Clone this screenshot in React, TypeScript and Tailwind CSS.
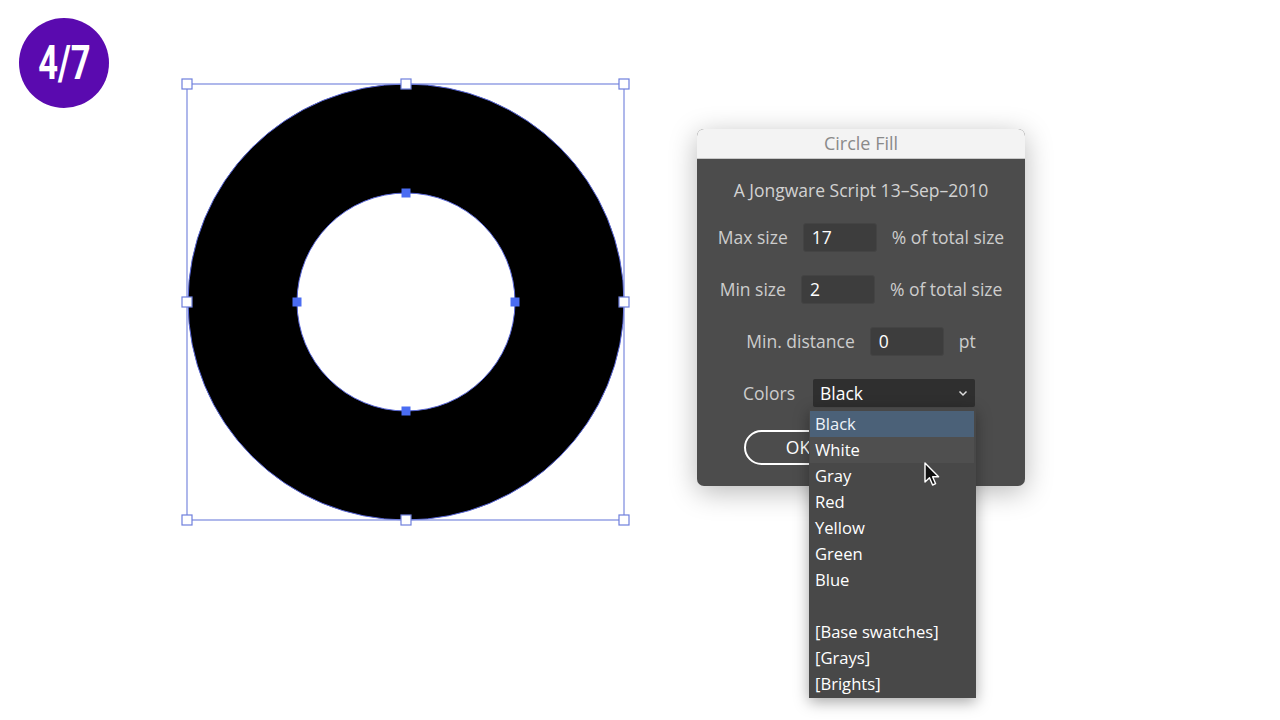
import React from "react";

const FONT = { fontFamily: '"Open Sans", "Liberation Sans", sans-serif' };

const COLORS = [
  "Black",
  "White",
  "Gray",
  "Red",
  "Yellow",
  "Green",
  "Blue",
  "",
  "[Base swatches]",
  "[Grays]",
  "[Brights]",
];

function Artwork() {
  const cx = 406;
  const cy = 302;
  const handles: [number, number][] = [
    [187, 84],
    [406, 84],
    [624, 84],
    [187, 302],
    [624, 302],
    [187, 520],
    [406, 520],
    [624, 520],
  ];
  const anchors: [number, number][] = [
    [406, 193],
    [297, 302],
    [515, 302],
    [406, 411],
  ];
  return (
    <svg
      className="absolute left-[177px] top-[74px]"
      width={460}
      height={460}
      viewBox="177 74 460 460"
    >
      <path
        fillRule="evenodd"
        fill="#000"
        stroke="#5866d6"
        strokeWidth={1}
        d={`M ${cx - 218} ${cy} a 218 218 0 1 0 436 0 a 218 218 0 1 0 -436 0 Z M ${cx - 109} ${cy} a 109 109 0 1 0 218 0 a 109 109 0 1 0 -218 0 Z`}
      />
      <rect
        x={187}
        y={84}
        width={437}
        height={436}
        fill="none"
        stroke="#7a89de"
        strokeWidth={1.2}
      />
      {handles.map(([x, y], i) => (
        <rect
          key={i}
          x={x - 5}
          y={y - 5}
          width={10}
          height={10}
          fill="#fff"
          stroke="#6e7fdc"
          strokeWidth={1.2}
        />
      ))}
      {anchors.map(([x, y], i) => (
        <rect key={i} x={x - 4.5} y={y - 4.5} width={9} height={9} fill="#4a6cf2" />
      ))}
    </svg>
  );
}

function Row({ label, value, unit }: { label: string; value: string; unit: string }) {
  return (
    <div className="flex h-[52px] items-center justify-center gap-[15px]">
      <span className="text-[17.5px] font-medium text-[#cdcdcd]">{label}</span>
      <div className="flex h-[29px] w-[74px] items-center rounded-[3px] border border-[#444] bg-[#3d3d3d] px-[8px] text-[17.5px] font-medium text-white">
        {value}
      </div>
      <span className="text-[17.5px] font-medium text-[#cdcdcd]">{unit}</span>
    </div>
  );
}

function Dialog() {
  return (
    <div
      className="absolute left-[697px] top-[129px] h-[357px] w-[328px] overflow-hidden rounded-[7px] bg-[#4c4c4c] shadow-[0_6px_28px_rgba(0,0,0,0.28)]"
      style={FONT}
    >
      <div className="flex h-[30px] items-center justify-center border-b border-[#c8c8c8] bg-[#f3f3f3] text-[18px] text-[#8a8a8a]">
        Circle Fill
      </div>
      <div className="flex h-[62px] items-center justify-center text-[17.5px] font-medium text-[#d2d2d2]">
        A Jongware Script 13–Sep–2010
      </div>
      <div className="-mt-[10px]">
        <Row label="Max size" value="17" unit="% of total size" />
        <Row label="Min size" value="2" unit="% of total size" />
        <Row label="Min. distance" value="0" unit="pt" />
        <div className="flex h-[52px] items-center justify-center gap-[18px] pr-[4px]">
          <span className="text-[17.5px] font-medium text-[#cdcdcd]">Colors</span>
          <div className="flex h-[28px] w-[162px] items-center justify-between rounded-[2px] bg-[#2f2f2f] pl-[7px] pr-[6px] text-[17.5px] font-medium text-white">
            Black
            <svg width="12" height="12" viewBox="0 0 12 12">
              <path d="M2.5 4.5 L6 8 L9.5 4.5" fill="none" stroke="#ddd" strokeWidth="1.5" />
            </svg>
          </div>
        </div>
      </div>
      <div className="mt-[11px] pl-[47px]">
        <div className="flex h-[35px] w-[108px] items-center justify-center rounded-full border-2 border-white text-[17.5px] font-medium text-white">
          OK
        </div>
      </div>
    </div>
  );
}

function Dropdown() {
  return (
    <div
      className="absolute left-[809px] top-[408px] w-[167px] bg-[#484848] pt-[3px] pb-[1px] pl-[1px] pr-[2px] shadow-[0_4px_14px_rgba(0,0,0,0.35)]"
      style={FONT}
    >
      {COLORS.map((c, i) => (
        <div
          key={i}
          className={`flex h-[26px] items-center pl-[5px] text-[16.6px] font-medium ${
            i === 0
              ? "bg-[#4b6178] text-[#eef3f8]"
              : i === 1
                ? "bg-[#4f4f4f] text-white"
                : "text-white"
          }`}
        >
          {c}
        </div>
      ))}
    </div>
  );
}

function Cursor() {
  return (
    <svg
      className="absolute left-[923px] top-[461px]"
      width="20"
      height="28"
      viewBox="0 0 20 28"
    >
      <path
        d="M2 2 L2 21 L6.5 16.8 L9.6 24 L12.6 22.7 L9.6 15.8 L15.6 15.8 Z"
        fill="#111"
        stroke="#fff"
        strokeWidth="1.4"
        strokeLinejoin="round"
      />
    </svg>
  );
}

export default function App() {
  return (
    <div className="relative h-[720px] w-[1280px] overflow-hidden bg-white">
      <div className="absolute left-[19px] top-[18px] flex h-[90px] w-[90px] items-center justify-center rounded-full bg-[#5a0aaf]">
        <span
          className="inline-block scale-x-[0.72] text-[48px] font-bold leading-none text-white"
          style={{ fontFamily: 'Roboto, "Liberation Sans", sans-serif' }}
        >
          4/7
        </span>
      </div>
      <Artwork />
      <Dialog />
      <Dropdown />
      <Cursor />
    </div>
  );
}
